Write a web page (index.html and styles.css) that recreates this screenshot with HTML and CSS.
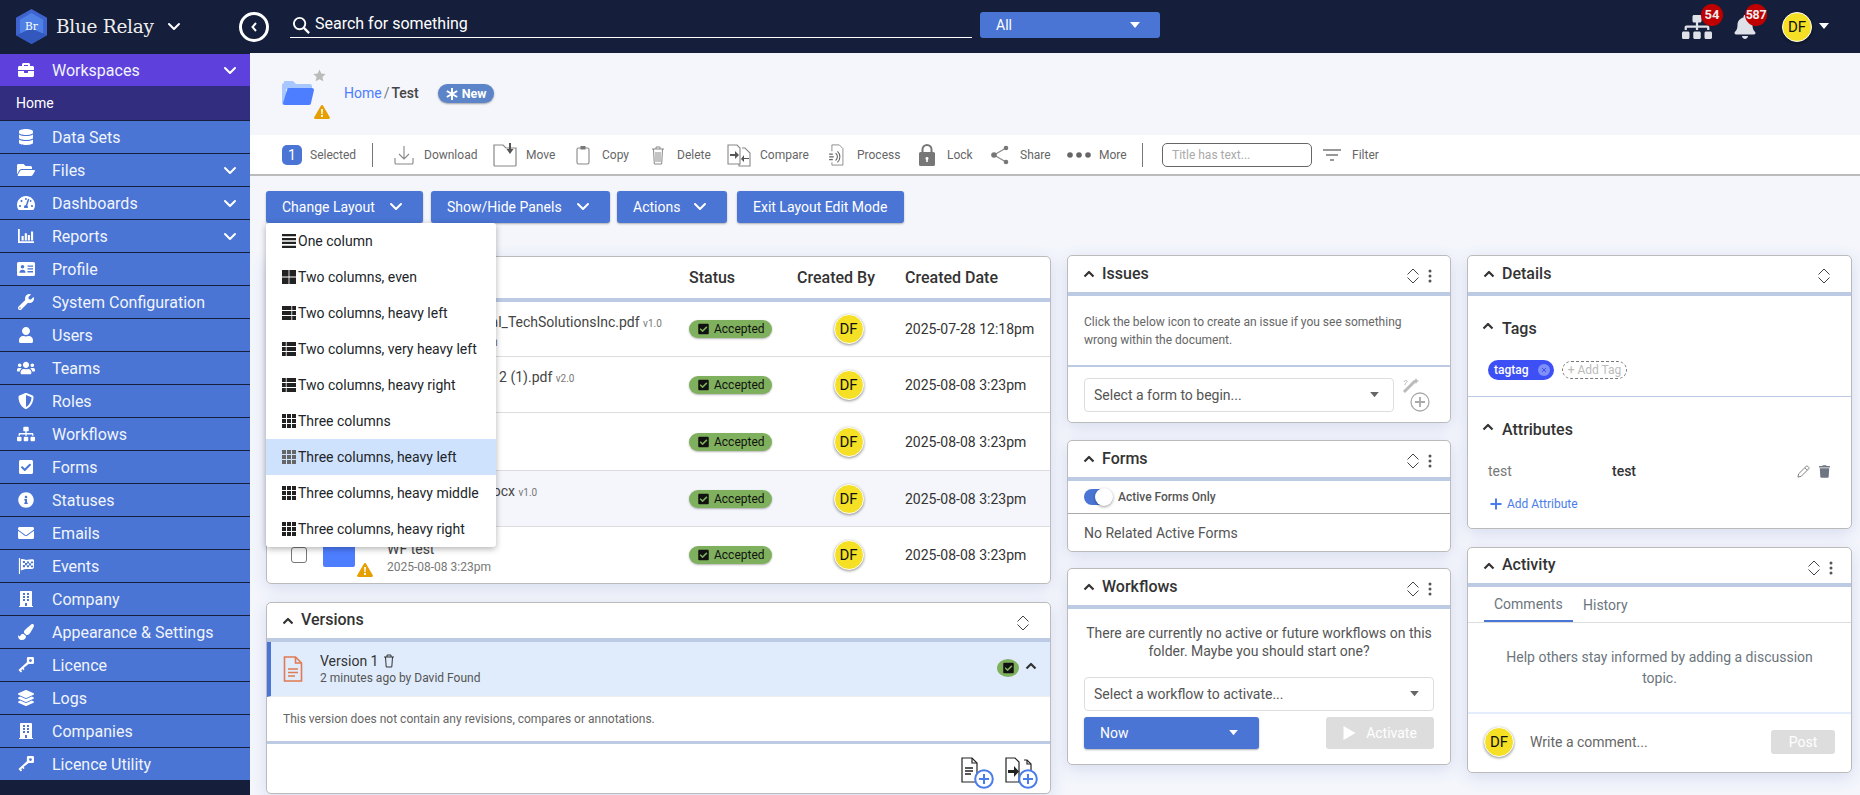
FILE: index.html
```html
<!DOCTYPE html>
<html lang="en">
<head>
<meta charset="utf-8">
<title>Blue Relay</title>
<link rel="stylesheet" href="styles.css">
</head>
<body>
<svg class="sprite" xmlns="http://www.w3.org/2000/svg">
<symbol id="i-briefcase" viewBox="0 0 512 512"><path d="M320 336c0 8.84-7.16 16-16 16h-96c-8.84 0-16-7.16-16-16v-48H0v144c0 25.6 22.4 48 48 48h416c25.6 0 48-22.4 48-48V288H320v48zm144-208h-80V80c0-25.6-22.4-48-48-48H176c-25.6 0-48 22.4-48 48v48H48c-25.6 0-48 22.4-48 48v80h512v-80c0-25.6-22.4-48-48-48zm-144 0H192V96h128v32z"/></symbol>
<symbol id="i-database" viewBox="0 0 448 512"><path d="M448 73.143v45.714C448 159.143 347.667 192 224 192S0 159.143 0 118.857V73.143C0 32.857 100.333 0 224 0s224 32.857 224 73.143zM448 176v102.857C448 319.143 347.667 352 224 352S0 319.143 0 278.857V176c48.125 33.143 136.208 48.572 224 48.572S399.874 209.143 448 176zm0 160v102.857C448 479.143 347.667 512 224 512S0 479.143 0 438.857V336c48.125 33.143 136.208 48.572 224 48.572S399.874 369.143 448 336z"/></symbol>
<symbol id="i-folder" viewBox="0 0 576 512"><path d="M572.694 292.093L500.27 416.248A63.997 63.997 0 0 1 444.989 448H45.025c-18.523 0-30.064-20.093-20.731-36.093l72.424-124.155A64 64 0 0 1 152 256h399.964c18.523 0 30.064 20.093 20.73 36.093zM152 224h328v-48c0-26.51-21.49-48-48-48H272l-64-64H48C21.49 64 0 85.49 0 112v278.046l69.077-118.418C86.214 242.25 117.989 224 152 224z"/></symbol>
<symbol id="i-gauge" viewBox="0 0 576 512"><path d="M288 32C128.94 32 0 160.94 0 320c0 52.8 14.25 102.26 39.06 144.8 5.61 9.62 16.3 15.2 27.44 15.2h443c11.14 0 21.83-5.58 27.44-15.2C561.75 422.26 576 372.8 576 320c0-159.06-128.94-288-288-288zm0 64c14.71 0 26.58 10.13 30.32 23.65-1.11 2.26-2.64 4.23-3.45 6.67l-9.22 27.67c-5.13 3.49-10.97 6.01-17.64 6.01-17.67 0-32-14.33-32-32S270.33 96 288 96zM96 384c-17.67 0-32-14.33-32-32s14.33-32 32-32 32 14.33 32 32-14.33 32-32 32zm48-160c-17.67 0-32-14.33-32-32s14.33-32 32-32 32 14.33 32 32-14.33 32-32 32zm246.77-72.41l-61.33 184C343.13 347.33 352 364.54 352 384c0 11.72-3.38 22.55-8.88 32H232.88c-5.5-9.45-8.88-20.28-8.88-32 0-33.94 26.5-61.43 59.9-63.59l61.34-184.01c4.17-12.56 17.73-19.45 30.36-15.17 12.57 4.19 19.35 17.79 15.17 30.36zm14.66 57.2l15.52-46.55c3.47-1.29 7.13-2.23 11.05-2.23 17.67 0 32 14.33 32 32s-14.33 32-32 32c-11.38-.01-20.89-6.28-26.57-15.22zM480 384c-17.67 0-32-14.33-32-32s14.33-32 32-32 32 14.33 32 32-14.33 32-32 32z"/></symbol>
<symbol id="i-chart" viewBox="0 0 18 18"><path d="M0 1h2v14h16v2H0zM4 9h2.4v5H4zM7.6 6h2.4v8H7.6zM11 8h2.4v6H11zM14.6 4H17v10h-2.4z"/></symbol>
<symbol id="i-idcard" viewBox="0 0 18 14"><path fill-rule="evenodd" d="M1.500 0h15A1.500 1.500 0 0 1 18 1.500v11a1.500 1.500 0 0 1-1.500 1.500h-15A1.500 1.500 0 0 1 0 12.500v-11A1.500 1.500 0 0 1 1.500 0zM5.500 3a1.800 1.800 0 1 0 0 3.600 1.800 1.800 0 0 0 0-3.600zM2.400 10.800h6.200c0-1.900-1.300-3.100-3.100-3.100s-3.100 1.200-3.100 3.100zM10.500 3.500v1.300h5.500V3.500zM10.500 6.300v1.300h5.500V6.300zM10.500 9.100v1.300h5.500V9.100z"/></symbol>
<symbol id="i-wrench" viewBox="0 0 512 512"><path d="M507.73 109.1c-2.24-9.03-13.54-12.09-20.12-5.51l-74.36 74.36-67.88-11.31-11.31-67.88 74.36-74.36c6.62-6.62 3.43-17.9-5.66-20.16-47.38-11.74-99.55.91-136.58 37.93-39.64 39.64-50.55 97.1-34.05 147.2L18.74 402.76c-24.99 24.99-24.99 65.51 0 90.5 24.99 24.99 65.51 24.99 90.5 0l213.21-213.21c50.12 16.71 107.47 5.68 147.37-34.22 37.07-37.07 49.7-89.32 37.91-136.73zM64 472c-13.25 0-24-10.75-24-24 0-13.26 10.75-24 24-24s24 10.74 24 24c0 13.25-10.75 24-24 24z"/></symbol>
<symbol id="i-user" viewBox="0 0 448 512"><path d="M224 256c70.7 0 128-57.3 128-128S294.7 0 224 0 96 57.3 96 128s57.3 128 128 128zm89.6 32h-16.7c-22.2 10.2-46.9 16-72.9 16s-50.6-5.8-72.9-16h-16.7C60.2 288 0 348.2 0 422.4V464c0 26.5 21.5 48 48 48h352c26.5 0 48-21.5 48-48v-41.6c0-74.2-60.2-134.4-134.400-134.400z"/></symbol>
<symbol id="i-users" viewBox="0 0 640 512"><path d="M96 224c35.3 0 64-28.7 64-64s-28.7-64-64-64-64 28.7-64 64 28.7 64 64 64zm448 0c35.3 0 64-28.7 64-64s-28.7-64-64-64-64 28.7-64 64 28.7 64 64 64zm32 32h-64c-17.6 0-33.5 7.1-45.1 18.6 40.3 22.1 68.9 62 75.1 109.4h66c17.7 0 32-14.3 32-32v-32c0-35.3-28.7-64-64-64zm-256 0c61.9 0 112-50.1 112-112S381.9 32 320 32 208 82.1 208 144s50.1 112 112 112zm76.8 32h-8.3c-20.8 10-43.9 16-68.5 16s-47.6-6-68.5-16h-8.3C179.6 288 128 339.6 128 403.2V432c0 26.5 21.5 48 48 48h288c26.5 0 48-21.5 48-48v-28.8c0-63.6-51.6-115.2-115.2-115.2zm-223.7-13.4C161.5 263.1 145.6 256 128 256H64c-35.3 0-64 28.7-64 64v32c0 17.7 14.3 32 32 32h65.9c6.3-47.4 34.9-87.3 75.2-109.4z"/></symbol>
<symbol id="i-shield" viewBox="0 0 512 512"><path d="M466.5 83.700l-192-80a48.150 48.150 0 0 0-36.900 0l-192 80C27.700 91.100 16 108.600 16 128c0 198.500 114.500 335.700 221.500 380.300 11.800 4.900 25.100 4.900 36.900 0C360.100 472.600 496 349.300 496 128c0-19.400-11.700-36.900-29.500-44.300zM256.100 446.300l-.1-381 175.900 73.300c-3.300 151.400-82.100 261.100-175.800 307.700z"/></symbol>
<symbol id="i-sitemap" viewBox="0 0 640 512"><path d="M128 352H32c-17.670 0-32 14.330-32 32v96c0 17.670 14.330 32 32 32h96c17.670 0 32-14.330 32-32v-96c0-17.670-14.330-32-32-32zm-24-80h192v48h48v-48h192v48h48v-57.590c0-21.170-17.230-38.410-38.410-38.410H344v-64h40c17.670 0 32-14.330 32-32V32c0-17.670-14.330-32-32-32H256c-17.670 0-32 14.330-32 32v96c0 17.670 14.330 32 32 32h40v64H94.410C73.230 224 56 241.230 56 262.410V320h48v-48zm264 80h-96c-17.670 0-32 14.330-32 32v96c0 17.670 14.330 32 32 32h96c17.670 0 32-14.330 32-32v-96c0-17.670-14.330-32-32-32zm240 0h-96c-17.670 0-32 14.330-32 32v96c0 17.670 14.330 32 32 32h96c17.670 0 32-14.330 32-32v-96c0-17.670-14.330-32-32-32z"/></symbol>
<symbol id="i-check" viewBox="0 0 448 512"><path d="M400 480H48c-26.510 0-48-21.490-48-48V80c0-26.510 21.490-48 48-48h352c26.510 0 48 21.490 48 48v352c0 26.510-21.490 48-48 48zm-204.686-98.059l184-184c6.248-6.248 6.248-16.379 0-22.627l-22.627-22.627c-6.248-6.248-16.379-6.249-22.628 0L184 302.745l-70.059-70.059c-6.248-6.248-16.379-6.248-22.628 0l-22.627 22.627c-6.248 6.248-6.248 16.379 0 22.627l104 104c6.249 6.250 16.379 6.250 22.628.001z"/></symbol>
<symbol id="i-info" viewBox="0 0 512 512"><path d="M256 8C119.043 8 8 119.083 8 256c0 136.997 111.043 248 248 248s248-111.003 248-248C504 119.083 392.957 8 256 8zm0 110c23.196 0 42 18.804 42 42s-18.804 42-42 42-42-18.804-42-42 18.804-42 42-42zm56 254c0 6.627-5.373 12-12 12h-88c-6.627 0-12-5.373-12-12v-24c0-6.627 5.373-12 12-12h12v-64h-12c-6.627 0-12-5.373-12-12v-24c0-6.627 5.373-12 12-12h64c6.627 0 12 5.373 12 12v100h12c6.627 0 12 5.373 12 12v24z"/></symbol>
<symbol id="i-mail" viewBox="0 0 512 512"><path d="M502.300 190.800c3.900-3.100 9.700-.2 9.700 4.700V400c0 26.500-21.500 48-48 48H48c-26.500 0-48-21.500-48-48V195.600c0-5 5.700-7.800 9.700-4.700 22.400 17.400 52.100 39.500 154.100 113.600 21.100 15.400 56.700 47.800 92.200 47.600 35.700.3 72-32.800 92.300-47.600 102-74.100 131.600-96.300 154-113.700zM256 320c23.200.4 56.600-29.200 73.400-41.400 132.700-96.300 142.800-104.700 173.400-128.700 5.800-4.500 9.200-11.500 9.200-18.900v-19c0-26.500-21.500-48-48-48H48C21.500 64 0 85.500 0 112v19c0 7.400 3.400 14.300 9.200 18.900 30.600 23.900 40.700 32.400 173.400 128.700 16.800 12.200 50.200 41.800 73.400 41.400z"/></symbol>
<symbol id="i-flag" viewBox="0 0 18 18"><path fill-rule="evenodd" d="M1 0h1.300v18H1zM3.200 1.500c3-1 4.800 1 7.500.6 2-.3 4.200-1 5.800-.6 1 .2 1.500.8 1.500 1.500v7.500c0 1-.8 1.600-2 1.800-2.700.5-5-.3-7.500.2-2 .4-3.700 1-5.300 1.500zM5.500 3.500v2.200h2.300V3.500zM10 4v2.200h2.400V4zM14.500 3.800V6H17V3.800zM7.800 5.700v2.400h2.200V5.700zM12.400 6v2.300h2.100V6zM5.500 8v2.300h2.300V8zM10 8.200v2.300h2.400V8.200zM14.500 8.300v2.200H17V8.300z"/></symbol>
<symbol id="i-building" viewBox="0 0 448 512"><path d="M436 480h-20V24c0-13.255-10.745-24-24-24H56C42.745 0 32 10.745 32 24v456H12c-6.627 0-12 5.373-12 12v20h448v-20c0-6.627-5.373-12-12-12zM128 76c0-6.627 5.373-12 12-12h40c6.627 0 12 5.373 12 12v40c0 6.627-5.373 12-12 12h-40c-6.627 0-12-5.373-12-12V76zm0 96c0-6.627 5.373-12 12-12h40c6.627 0 12 5.373 12 12v40c0 6.627-5.373 12-12 12h-40c-6.627 0-12-5.373-12-12v-40zm52 148h-40c-6.627 0-12-5.373-12-12v-40c0-6.627 5.373-12 12-12h40c6.627 0 12 5.373 12 12v40c0 6.627-5.373 12-12 12zm76 160h-64v-84c0-6.627 5.373-12 12-12h40c6.627 0 12 5.373 12 12v84zm64-172c0 6.627-5.373 12-12 12h-40c-6.627 0-12-5.373-12-12v-40c0-6.627 5.373-12 12-12h40c6.627 0 12 5.373 12 12v40zm0-96c0 6.627-5.373 12-12 12h-40c-6.627 0-12-5.373-12-12v-40c0-6.627 5.373-12 12-12h40c6.627 0 12 5.373 12 12v40zm0-96c0 6.627-5.373 12-12 12h-40c-6.627 0-12-5.373-12-12V76c0-6.627 5.373-12 12-12h40c6.627 0 12 5.373 12 12v40z"/></symbol>
<symbol id="i-brush" viewBox="0 0 512 512"><path d="M167.020 309.340c-40.120 2.580-76.530 17.860-97.190 72.300-2.350 6.210-8 9.980-14.590 9.980-11.110 0-45.460-27.670-55.250-34.350C0 439.620 37.930 512 128 512c75.860 0 128-43.770 128-120.190 0-3.110-.65-6.080-.97-9.130l-88.010-73.340zM457.890 0c-15.160 0-29.370 6.710-40.210 16.450C213.270 199.050 192 203.340 192 257.090c0 13.700 3.250 26.760 8.730 38.700l63.820 53.180c7.210 1.800 14.640 3.030 22.390 3.030 62.110 0 98.110-45.470 211.160-256.460 7.380-14.350 13.900-29.850 13.900-45.990C512 20.640 486 0 457.890 0z"/></symbol>
<symbol id="i-key" viewBox="0 0 18 18"><path d="M11.500 0h5A1.500 1.500 0 0 1 18 1.500v5A1.500 1.500 0 0 1 16.500 8h-5A1.500 1.500 0 0 1 10 6.500v-5A1.500 1.500 0 0 1 11.500 0zM14 2.400a1.600 1.600 0 1 0 0 3.200 1.600 1.600 0 0 0 0-3.200z"/><path d="M10 6L.5 14.500l2.700 3 1.500-1.400-1.200-1.200 1.400-1.300 1.200 1.200 1.300-1.200-1.200-1.200L12 8z"/></symbol>
<symbol id="i-layers" viewBox="0 0 512 512"><path d="M12.410 148.020l232.940 105.670c6.800 3.090 14.490 3.090 21.290 0l232.940-105.670c16.550-7.510 16.550-32.520 0-40.030L266.650 2.310a25.607 25.607 0 0 0-21.290 0L12.410 107.980c-16.550 7.510-16.550 32.530 0 40.040zm487.180 88.280l-58.090-26.330-161.640 73.270c-7.560 3.430-15.590 5.170-23.860 5.170s-16.290-1.740-23.860-5.170L70.510 209.970l-58.100 26.330c-16.550 7.500-16.550 32.500 0 40l232.940 105.590c6.800 3.080 14.490 3.080 21.290 0L499.590 276.300c16.550-7.500 16.550-32.500 0-40zm0 127.800l-57.870-26.230-161.860 73.370c-7.560 3.430-15.590 5.170-23.860 5.170s-16.290-1.740-23.860-5.170L70.290 337.870 12.410 364.100c-16.550 7.500-16.550 32.500 0 40l232.940 105.590c6.800 3.080 14.490 3.080 21.290 0L499.590 404.100c16.550-7.500 16.550-32.500 0-40z"/></symbol>
<symbol id="i-bell" viewBox="0 0 448 512"><path d="M224 512c35.320 0 63.970-28.650 63.970-64H160.030c0 35.350 28.650 64 63.970 64zm215.390-149.710c-19.320-20.760-55.470-51.990-55.470-154.290 0-77.700-54.480-139.900-127.940-155.160V32c0-17.670-14.320-32-31.980-32s-31.980 14.330-31.980 32v20.840C118.560 68.100 64.080 130.300 64.080 208c0 102.300-36.150 133.530-55.470 154.290-6 6.450-8.660 14.160-8.610 21.710.11 16.400 12.980 32 32.100 32h383.800c19.120 0 32-15.600 32.100-32 .05-7.550-2.610-15.260-8.610-21.710z"/></symbol>
<symbol id="i-trash" viewBox="0 0 448 512"><path d="M432 32H312l-9.400-18.700A24 24 0 0 0 281.100 0H166.800a23.720 23.720 0 0 0-21.400 13.300L136 32H16A16 16 0 0 0 0 48v32a16 16 0 0 0 16 16h416a16 16 0 0 0 16-16V48a16 16 0 0 0-16-16zM53.200 467a48 48 0 0 0 47.900 45h245.800a48 48 0 0 0 47.900-45L416 128H32z"/></symbol>
<symbol id="i-chev" viewBox="0 0 14 10"><path d="M2 2l5 5 5-5" fill="none" stroke="currentColor" stroke-width="2" stroke-linecap="round" stroke-linejoin="round"/></symbol>
<symbol id="i-up" viewBox="0 0 12 8"><path d="M1.500 6.500L6 2l4.500 4.500" fill="none" stroke="currentColor" stroke-width="2.200" stroke-linejoin="round"/></symbol>
<symbol id="i-caret" viewBox="0 0 12 7"><path d="M1 0h10L6 6z"/></symbol>
<symbol id="i-expand" viewBox="0 0 14 20"><path d="M1.500 8.500L7 3l5.500 5.500M1.500 11.500L7 17l5.500-5.500" fill="none" stroke="currentColor" stroke-width="1"/></symbol>
<symbol id="i-kebab" viewBox="0 0 4 14"><circle cx="2" cy="2" r="1.500"/><circle cx="2" cy="7" r="1.500"/><circle cx="2" cy="12" r="1.500"/></symbol>
<symbol id="i-warn" viewBox="0 0 16 14"><path d="M8 0c.5 0 .9.3 1.100.7l6.700 11.500c.4.800-.1 1.800-1.100 1.800H1.300c-1 0-1.500-1-1.100-1.800L6.900.7C7.100.3 7.500 0 8 0z" fill="#e69f00"/><path d="M7.100 4h1.800l-.3 5H7.400zM8 9.800a1.100 1.100 0 1 1 0 2.200 1.100 1.100 0 0 1 0-2.200z" fill="#fff"/></symbol>
<symbol id="i-bars" viewBox="0 0 14 14"><path d="M0 0h14v2.300H0zM0 3.900h14v2.300H0zM0 7.800h14v2.300H0zM0 11.700h14V14H0z"/></symbol>
<symbol id="i-large" viewBox="0 0 14 14"><path d="M0 0h6.600v6.600H0zM7.400 0H14v6.600H7.400zM0 7.400h6.600V14H0zM7.400 7.400H14V14H7.400z"/></symbol>
<symbol id="i-list" viewBox="0 0 14 14"><path d="M0 0h3.800v3.900H0zM4.600 0H14v3.900H4.600zM0 5h3.800v3.900H0zM4.600 5H14v3.900H4.600zM0 10h3.800v4H0zM4.600 10H14v4H4.600z"/></symbol>
<symbol id="i-listr" viewBox="0 0 14 14"><path d="M0 0h9.400v3.900H0zM10.200 0H14v3.900h-3.800zM0 5h9.400v3.900H0zM10.200 5H14v3.900h-3.800zM0 10h9.400v4H0zM10.200 10H14v4h-3.800z"/></symbol>
<symbol id="i-grid" viewBox="0 0 14 14"><path d="M0 0h4v4H0zM5 0h4v4H5zM10 0h4v4h-4zM0 5h4v4H0zM5 5h4v4H5zM10 5h4v4h-4zM0 10h4v4H0zM5 10h4v4H5zM10 10h4v4h-4z"/></symbol>
<symbol id="i-doc" viewBox="0 0 20 26"><path d="M1.500 1h11l6 6v18h-17z" fill="none" stroke="currentColor" stroke-width="1.600"/><path d="M12.500 1v6h6M5 13h10M5 16.500h10M5 20h7" fill="none" stroke="currentColor" stroke-width="1.600"/></symbol>
<symbol id="i-plus" viewBox="0 0 20 20"><circle cx="10" cy="10" r="8.800" fill="#fff" stroke="currentColor" stroke-width="2"/><path d="M10 5v10M5 10h10" stroke="currentColor" stroke-width="2" fill="none"/></symbol>
<symbol id="i-docplus" viewBox="0 0 34 32"><path d="M1 1h10l5 5v19H1z" fill="none" stroke="#222" stroke-width="1.200"/><path d="M11 1v5h5" fill="none" stroke="#222" stroke-width="1.200"/><path d="M4 11h8M4 14h8M4 17h6" stroke="#222" stroke-width="1.400"/></symbol>
<symbol id="i-cmpplus" viewBox="0 0 34 32"><path d="M1 1h9l4 4v20H1z" fill="none" stroke="#222" stroke-width="1.200"/><path d="M3 13h6V9l5 5.500L9 20v-4H3z" fill="#222"/><path d="M19 3h3l4 4v14" fill="none" stroke="#222" stroke-width="1.200"/><path d="M22 3v4h4" fill="none" stroke="#222" stroke-width="1.200"/><path d="M22 13v8l-4-4z" fill="#222"/></symbol>
</svg>

<header class="topbar">
  <div class="brand">
    <svg class="logo" viewBox="0 0 32 36"><polygon points="16,0 32,9 32,27 16,36 0,27 0,9" fill="#3f63cf"/><polygon points="16,4 28,11 28,25 16,32 4,25 4,11" fill="#4f80e6"/><polygon points="0,27 16,20 32,27 16,36" fill="#3358bd"/><text x="16" y="22" text-anchor="middle" class="logo-text">Br</text></svg>
    <span class="brand-name">Blue Relay</span>
    <svg class="w14 white"><use href="#i-chev"/></svg>
  </div>
  <div class="back"><svg class="back-ic" viewBox="0 0 8 12"><path d="M6 2L2.500 6 6 10" fill="none" stroke="#fff" stroke-width="2"/></svg></div>
  <div class="search">
    <svg class="search-ic" viewBox="0 0 20 20"><circle cx="8" cy="8" r="6" fill="none" stroke="#fff" stroke-width="2"/><path d="M12.500 12.500L18 18" stroke="#fff" stroke-width="2.400" fill="none"/></svg>
    <span>Search for something</span>
  </div>
  <div class="scope"><span>All</span><svg class="w12 white"><use href="#i-caret"/></svg></div>
  <div class="top-right">
    <div class="notif notif-site"><svg class="site-ic"><use href="#i-sitemap"/></svg><b class="badge">54</b></div>
    <div class="notif notif-bell"><svg class="bell-ic"><use href="#i-bell"/></svg><b class="badge badge-b">587</b></div>
    <span class="avatar avatar-top">DF</span>
    <svg class="w12 white"><use href="#i-caret"/></svg>
  </div>
</header>

<div class="shell">
<nav class="sidebar">
  <a class="nav nav-active"><svg class="nav-ic"><use href="#i-briefcase"/></svg><span>Workspaces</span><svg class="w14 nav-chev"><use href="#i-chev"/></svg></a>
  <a class="nav-sub">Home</a>
  <a class="nav"><svg class="nav-ic"><use href="#i-database"/></svg><span>Data Sets</span></a>
  <a class="nav"><svg class="nav-ic"><use href="#i-folder"/></svg><span>Files</span><svg class="w14 nav-chev"><use href="#i-chev"/></svg></a>
  <a class="nav"><svg class="nav-ic"><use href="#i-gauge"/></svg><span>Dashboards</span><svg class="w14 nav-chev"><use href="#i-chev"/></svg></a>
  <a class="nav"><svg class="nav-ic"><use href="#i-chart"/></svg><span>Reports</span><svg class="w14 nav-chev"><use href="#i-chev"/></svg></a>
  <a class="nav"><svg class="nav-ic"><use href="#i-idcard"/></svg><span>Profile</span></a>
  <a class="nav"><svg class="nav-ic"><use href="#i-wrench"/></svg><span>System Configuration</span></a>
  <a class="nav"><svg class="nav-ic"><use href="#i-user"/></svg><span>Users</span></a>
  <a class="nav"><svg class="nav-ic"><use href="#i-users"/></svg><span>Teams</span></a>
  <a class="nav"><svg class="nav-ic"><use href="#i-shield"/></svg><span>Roles</span></a>
  <a class="nav"><svg class="nav-ic"><use href="#i-sitemap"/></svg><span>Workflows</span></a>
  <a class="nav"><svg class="nav-ic"><use href="#i-check"/></svg><span>Forms</span></a>
  <a class="nav"><svg class="nav-ic"><use href="#i-info"/></svg><span>Statuses</span></a>
  <a class="nav"><svg class="nav-ic"><use href="#i-mail"/></svg><span>Emails</span></a>
  <a class="nav"><svg class="nav-ic"><use href="#i-flag"/></svg><span>Events</span></a>
  <a class="nav"><svg class="nav-ic"><use href="#i-building"/></svg><span>Company</span></a>
  <a class="nav"><svg class="nav-ic"><use href="#i-brush"/></svg><span>Appearance &amp; Settings</span></a>
  <a class="nav"><svg class="nav-ic"><use href="#i-key"/></svg><span>Licence</span></a>
  <a class="nav"><svg class="nav-ic"><use href="#i-layers"/></svg><span>Logs</span></a>
  <a class="nav"><svg class="nav-ic"><use href="#i-building"/></svg><span>Companies</span></a>
  <a class="nav"><svg class="nav-ic"><use href="#i-key"/></svg><span>Licence Utility</span></a>
</nav>

<main class="main">
  <section class="pagehead">
    <div class="folder-box">
      <svg class="folder-big" viewBox="0 0 32 24"><path d="M2 0h9l3 3h14a2 2 0 0 1 2 2v3H2z" fill="#a9c7ff"/><path d="M0 4a2 2 0 0 1 2-2h2v22H2a2 2 0 0 1-2-2z" fill="#a9c7ff"/><path d="M3 24a2 2 0 0 1-2-2L5 9a2 2 0 0 1 2-2h23a2 2 0 0 1 2 2l-3 13a2 2 0 0 1-2 2z" fill="#4d7eff"/></svg>
      <svg class="star" viewBox="0 0 24 24"><path d="M12 1l3.400 7.400 8 .9-6 5.400 1.700 8L12 18.700 4.900 22.700l1.700-8-6-5.400 8-.9z" fill="#bbb"/></svg>
      <svg class="warn-big"><use href="#i-warn"/></svg>
    </div>
    <div class="crumbs"><a class="crumb-link">Home</a><span class="crumb-sep">/</span><span class="crumb-cur">Test</span></div>
    <span class="new-pill"><svg class="new-ic" viewBox="0 0 12 12"><path d="M6 0v12M.8 3l10.400 6M11.200 3L.8 9" stroke="#fff" stroke-width="2"/></svg>New</span>
  </section>

  <section class="toolbar">
    <span class="count">1</span><span class="tool-label sel">Selected</span>
    <span class="vsep"></span>
    <div class="tools">
      <div class="tool tool-first"><svg class="ti" viewBox="0 0 20 20"><path d="M10 1v13M5 9l5 5 5-5M1 13v5a1 1 0 0 0 1 1h16a1 1 0 0 0 1-1v-5" fill="none" stroke="#888" stroke-width="1.100"/></svg><span class="tool-label">Download</span></div>
      <div class="tool"><svg class="ti-move" viewBox="0 0 24 24"><path d="M1 2h9l3 3h10v17a1 1 0 0 1-1 1H2a1 1 0 0 1-1-1z" fill="none" stroke="#888" stroke-width="1.200"/><path d="M16 0h2v6h2.500L17 11l-3.500-5H16z" fill="#555"/></svg><span class="tool-label">Move</span></div>
      <div class="tool"><svg class="ti-narrow" viewBox="0 0 14 20"><rect x="1" y="3" width="12" height="16" rx="1.500" fill="none" stroke="#888" stroke-width="1.100"/><rect x="4.500" y="1" width="5" height="3.500" fill="#777"/></svg><span class="tool-label">Copy</span></div>
      <div class="tool"><svg class="ti-narrow" viewBox="0 0 14 20"><path d="M1 4h12M5 4V2h4v2M2.500 4l.8 15h7.400l.8-15M5 7v10M7 7v10M9 7v10" fill="none" stroke="#888" stroke-width="1"/></svg><span class="tool-label">Delete</span></div>
      <div class="tool"><svg class="ti-move" viewBox="0 0 24 24"><path d="M1 2h9l3 3v16H1zM15 5h3l5 5v13H12v-2" fill="none" stroke="#888" stroke-width="1.100"/><path d="M3 11h5V8l4 4-4 4v-3H3zM22 15h-5v-3l-3 4 3 3v-3h5z" fill="#555"/></svg><span class="tool-label">Compare</span></div>
      <div class="tool"><svg class="ti-proc" viewBox="0 0 16 24"><path d="M3 8V1h8l4 4v18H3v-3" fill="none" stroke="#888" stroke-width="1"/><path d="M0 11h4M0 14h5M0 17h4M7 10a5 5 0 0 1 0 8M9 8a8 8 0 0 1 0 12" fill="none" stroke="#666" stroke-width="1.200"/></svg><span class="tool-label">Process</span></div>
      <div class="tool"><svg class="ti-lock" viewBox="0 0 16 22"><path d="M3.500 9V5.500a4.500 4.500 0 0 1 9 0V9" fill="none" stroke="#777" stroke-width="2"/><path fill-rule="evenodd" d="M1.500 8h13A1.500 1.500 0 0 1 16 9.500v11a1.500 1.500 0 0 1-1.500 1.500h-13A1.500 1.500 0 0 1 0 20.500v-11A1.500 1.500 0 0 1 1.500 8zM8 13a1.500 1.500 0 0 0-.8 2.800V18h1.600v-2.200A1.500 1.500 0 0 0 8 13z" fill="#777"/></svg><span class="tool-label">Lock</span></div>
      <div class="tool"><svg class="ti-share" viewBox="0 0 18 20"><path d="M15 3L3 10l12 7" fill="none" stroke="#888" stroke-width="1.200"/><circle cx="15" cy="3" r="2.300" fill="#777"/><circle cx="3" cy="10" r="2.800" fill="#777"/><circle cx="15" cy="17" r="2.300" fill="#777"/></svg><span class="tool-label">Share</span></div>
      <div class="tool"><svg class="ti-dots" viewBox="0 0 24 6"><circle cx="3" cy="3" r="2.800" fill="#666"/><circle cx="12" cy="3" r="2.800" fill="#666"/><circle cx="21" cy="3" r="2.800" fill="#666"/></svg><span class="tool-label">More</span></div>
    </div>
    <span class="vsep vsep2"></span>
    <div class="title-filter">Title has text...</div>
    <svg class="ti-filter" viewBox="0 0 18 12"><path d="M0 1h18M3 6h12M7 11h4" stroke="#777" stroke-width="1.500" fill="none"/></svg>
    <span class="tool-label">Filter</span>
  </section>

  <div class="workspace">
    <div class="actions">
      <button class="btn btn-layout">Change Layout<svg class="w14 white"><use href="#i-chev"/></svg></button>
      <button class="btn btn-panels">Show/Hide Panels<svg class="w14 white"><use href="#i-chev"/></svg></button>
      <button class="btn btn-actions">Actions<svg class="w14 white"><use href="#i-chev"/></svg></button>
      <button class="btn btn-exit">Exit Layout Edit Mode</button>
    </div>
    <ul class="menu">
      <li class="menu-item"><svg class="mi"><use href="#i-bars"/></svg>One column</li>
      <li class="menu-item"><svg class="mi"><use href="#i-large"/></svg>Two columns, even</li>
      <li class="menu-item"><svg class="mi"><use href="#i-listr"/></svg>Two columns, heavy left</li>
      <li class="menu-item"><svg class="mi"><use href="#i-list"/></svg>Two columns, very heavy left</li>
      <li class="menu-item"><svg class="mi"><use href="#i-list"/></svg>Two columns, heavy right</li>
      <li class="menu-item"><svg class="mi"><use href="#i-grid"/></svg>Three columns</li>
      <li class="menu-item menu-on"><svg class="mi mi-on"><use href="#i-grid"/></svg>Three columns, heavy left</li>
      <li class="menu-item"><svg class="mi"><use href="#i-grid"/></svg>Three columns, heavy middle</li>
      <li class="menu-item"><svg class="mi"><use href="#i-grid"/></svg>Three columns, heavy right</li>
    </ul>

    <div class="columns">
      <div class="col col-a">
        <article class="card card-table">
          <div class="t-head">
            <span class="c-name"></span><span class="c-status">Status</span><span class="c-by">Created By</span><span class="c-date">Created Date</span>
          </div>
          <div class="t-row t-row-s">
            <span class="c-name"><span class="box"></span><span class="ficon"></span><span class="ftext"><span class="fname">Services_Proposal_TechSolutionsInc.pdf <small>v1.0</small></span><span class="fdate">2025-07-28 12:18pm</span></span></span>
            <span class="c-status"><span class="pill"><svg class="pill-ic"><use href="#i-check"/></svg>Accepted</span></span>
            <span class="c-by"><span class="avatar">DF</span></span>
            <span class="c-date">2025-07-28 12:18pm</span>
          </div>
          <div class="t-row">
            <span class="c-name"><span class="box"></span><span class="ficon"></span><span class="ftext"><span class="fname">Example_Reports 2 (1).pdf <small>v2.0</small></span><span class="fdate">2025-08-08 3:23pm</span></span></span>
            <span class="c-status"><span class="pill"><svg class="pill-ic"><use href="#i-check"/></svg>Accepted</span></span>
            <span class="c-by"><span class="avatar">DF</span></span>
            <span class="c-date">2025-08-08 3:23pm</span>
          </div>
          <div class="t-row t-row-l">
            <span class="c-name"><span class="box"></span><span class="ficon"></span><span class="ftext"><span class="fname">Test</span><span class="fdate">2025-08-08 3:23pm</span></span></span>
            <span class="c-status"><span class="pill"><svg class="pill-ic"><use href="#i-check"/></svg>Accepted</span></span>
            <span class="c-by"><span class="avatar">DF</span></span>
            <span class="c-date">2025-08-08 3:23pm</span>
          </div>
          <div class="t-row t-row-alt">
            <span class="c-name"><span class="box"></span><span class="ficon"></span><span class="ftext"><span class="fname">Meeting_Notes.docx <small>v1.0</small></span><span class="fdate">2025-08-08 3:23pm</span></span></span>
            <span class="c-status"><span class="pill"><svg class="pill-ic"><use href="#i-check"/></svg>Accepted</span></span>
            <span class="c-by"><span class="avatar">DF</span></span>
            <span class="c-date">2025-08-08 3:23pm</span>
          </div>
          <div class="t-row t-row-last">
            <span class="c-name"><span class="box"></span><span class="ficon"><svg class="warn-sm"><use href="#i-warn"/></svg></span><span class="ftext"><span class="fname">WF test</span><span class="fdate">2025-08-08 3:23pm</span></span></span>
            <span class="c-status"><span class="pill"><svg class="pill-ic"><use href="#i-check"/></svg>Accepted</span></span>
            <span class="c-by"><span class="avatar">DF</span></span>
            <span class="c-date">2025-08-08 3:23pm</span>
          </div>
        </article>

        <article class="card card-versions">
          <div class="c-head c-head-v"><svg class="up"><use href="#i-up"/></svg><h2>Versions</h2><svg class="exp exp-d"><use href="#i-expand"/></svg></div>
          <div class="v-row">
            <svg class="v-doc"><use href="#i-doc"/></svg>
            <div class="v-text">
              <div class="v-title">Version 1 <svg class="v-trash" viewBox="0 0 12 14"><path d="M1 3h10M4 3V1h4v2M2.500 3l.7 10h5.600l.7-10" fill="none" stroke="#333" stroke-width="1"/></svg></div>
              <div class="v-sub">2 minutes ago by David Found</div>
            </div>
            <span class="v-status"><svg class="pill-ic"><use href="#i-check"/></svg></span>
            <svg class="up up-v"><use href="#i-up"/></svg>
          </div>
          <div class="v-msg">This version does not contain any revisions, compares or annotations.</div>
          <div class="v-foot">
            <span class="add-ic"><svg class="add-base"><use href="#i-docplus"/></svg><svg class="add-plus"><use href="#i-plus"/></svg></span>
            <span class="add-ic"><svg class="add-base"><use href="#i-cmpplus"/></svg><svg class="add-plus"><use href="#i-plus"/></svg></span>
          </div>
        </article>
      </div>

      <div class="col col-b">
        <article class="card card-issues">
          <div class="c-head"><svg class="up"><use href="#i-up"/></svg><h2>Issues</h2><svg class="exp"><use href="#i-expand"/></svg><svg class="keb"><use href="#i-kebab"/></svg></div>
          <p class="issue-msg">Click the below icon to create an issue if you see something wrong within the document.</p>
          <div class="issue-foot">
            <div class="select select-issue"><span>Select a form to begin...</span><svg class="w10 grey"><use href="#i-caret"/></svg></div>
            <span class="wand"><svg class="wand-ic" viewBox="0 0 18 16"><path d="M2 14L13 3" stroke="#bbb" stroke-width="3"/><path d="M14 0l1 2 2 1-2 1-1 2-1-2-2-1 2-1z" fill="#bbb"/><path d="M2 4c0-2 4-2 3 0-.5 1-2 1-2 3" stroke="#bbb" fill="none"/></svg><svg class="wand-plus" viewBox="0 0 20 20"><circle cx="10" cy="10" r="9" fill="#fff" stroke="#aaa" stroke-width="1.300"/><path d="M10 5v10M5 10h10" stroke="#aaa" stroke-width="1.800"/></svg></span>
          </div>
        </article>

        <article class="card card-forms">
          <div class="c-head"><svg class="up"><use href="#i-up"/></svg><h2>Forms</h2><svg class="exp"><use href="#i-expand"/></svg><svg class="keb"><use href="#i-kebab"/></svg></div>
          <div class="toggle-row"><span class="toggle"><span class="knob"></span></span><span class="toggle-label">Active Forms Only</span></div>
          <div class="forms-empty">No Related Active Forms</div>
        </article>

        <article class="card card-wf">
          <div class="c-head"><svg class="up"><use href="#i-up"/></svg><h2>Workflows</h2><svg class="exp"><use href="#i-expand"/></svg><svg class="keb"><use href="#i-kebab"/></svg></div>
          <p class="wf-msg">There are currently no active or future workflows on this folder. Maybe you should start one?</p>
          <div class="select select-wf"><span>Select a workflow to activate...</span><svg class="w10 grey"><use href="#i-caret"/></svg></div>
          <div class="wf-actions">
            <button class="btn btn-now">Now<svg class="w10 white"><use href="#i-caret"/></svg></button>
            <button class="btn-off btn-activate"><svg class="play" viewBox="0 0 12 14"><path d="M0 0l12 7-12 7z" fill="#fff"/></svg>Activate</button>
          </div>
        </article>
      </div>

      <div class="col col-c">
        <article class="card card-details">
          <div class="c-head"><svg class="up"><use href="#i-up"/></svg><h2>Details</h2><svg class="exp exp-d"><use href="#i-expand"/></svg></div>
          <div class="sec sec-tags">
            <div class="sec-h"><svg class="up-thin"><use href="#i-up"/></svg><h3>Tags</h3></div>
            <div class="tags">
              <span class="tag">tagtag<svg class="tag-x" viewBox="0 0 12 12"><circle cx="6" cy="6" r="6" fill="#7f8ff8"/><path d="M4 4l4 4M8 4l-4 4" stroke="#3d50f5" stroke-width="1"/></svg></span>
              <span class="tag-add">+ Add Tag</span>
            </div>
          </div>
          <div class="sec sec-attrs">
            <div class="sec-h"><svg class="up-thin"><use href="#i-up"/></svg><h3>Attributes</h3></div>
            <div class="attr">
              <span class="attr-k">test</span><span class="attr-v">test</span>
              <svg class="pen" viewBox="0 0 14 14"><path d="M1 13l.8-3.500L10 1.300a1 1 0 0 1 1.400 0l1.300 1.300a1 1 0 0 1 0 1.400L4.500 12.200zM8.500 3l2.500 2.500" fill="none" stroke="#777" stroke-width="1"/></svg>
              <svg class="bin"><use href="#i-trash"/></svg>
            </div>
            <div class="add-attr"><svg class="plus-sm" viewBox="0 0 12 12"><path d="M6 .5v11M.5 6h11" stroke="#4a7dea" stroke-width="2"/></svg>Add Attribute</div>
          </div>
        </article>

        <article class="card card-activity">
          <div class="c-head c-head-a"><svg class="up"><use href="#i-up"/></svg><h2>Activity</h2><svg class="exp"><use href="#i-expand"/></svg><svg class="keb"><use href="#i-kebab"/></svg></div>
          <div class="tabs"><span class="tab tab-on">Comments</span><span class="tab">History</span></div>
          <p class="act-msg">Help others stay informed by adding a discussion topic.</p>
          <div class="composer"><span class="avatar">DF</span><span class="placeholder">Write a comment...</span><button class="btn-off btn-post">Post</button></div>
        </article>
      </div>
    </div>
  </div>
</main>
</div>
</body>
</html>
```
FILE: styles.css
```css
* { box-sizing: border-box; }
html, body { margin: 0; height: 795px; overflow: hidden; }
body { font-family: Roboto, "Liberation Sans", sans-serif; font-size: 14px; color: #333; background: #151e3a; }
h2, h3, p, ul { margin: 0; padding: 0; }
svg { flex: none; display: block; fill: currentColor; }
.sprite { display: none; }
.w14 { width: 14px; height: 10px; }
.w12 { width: 12px; height: 7px; }
.w10 { width: 11px; height: 6px; }
.white { color: #fff; }
.grey { color: #666; }

/* top bar */
.topbar { height: 53px; background: #151e3a; display: flex; align-items: center; color: #fff; }
.brand { width: 239px; padding-left: 16px; display: flex; align-items: center; }
.logo { width: 31px; height: 35px; }
.logo-text { font-family: "DejaVu Serif", serif; font-size: 11px; fill: #fff; }
.brand-name { font-family: "DejaVu Serif", serif; font-size: 18.5px; margin: 0 13px 0 9px; color: #eee; letter-spacing: -.3px; white-space: nowrap; }
.back { width: 30px; height: 30px; border: 3px solid #fff; border-radius: 50%; display: flex; align-items: center; justify-content: center; }
.back-ic { width: 8px; height: 12px; }
.search { width: 682px; height: 30px; align-self: flex-start; margin: 8px 0 0 21px; border-bottom: 1px solid #fff; display: flex; align-items: center; font-size: 16px; padding: 2px 0 0 2px; }
.search-ic { width: 19px; height: 19px; margin: 3px 4px 0 0; }
.scope { width: 180px; height: 26px; align-self: flex-start; margin: 12px 0 0 8px; background: #4a75d4; border-radius: 3px; display: flex; align-items: center; justify-content: space-between; padding: 0 19px 0 16px; }
.top-right { margin-left: auto; display: flex; align-items: center; padding-right: 30px; }
.notif { position: relative; }
.notif-site { margin-right: 22px; }
.notif-bell { margin-right: 26px; }
.site-ic { width: 30px; height: 24px; color: #dfe1e8; }
.bell-ic { width: 22px; height: 24px; color: #dfe1e8; }
.badge { position: absolute; top: -11px; right: -11px; width: 22px; height: 22px; border-radius: 50%; background: #c00000; color: #eee; font-size: 13px; font-weight: 700; display: flex; align-items: center; justify-content: center; }
.badge-b { font-size: 12.500px; letter-spacing: -.3px; }
.avatar { width: 30px; height: 30px; border-radius: 50%; background: #f5e026; border: 1px solid #fff; box-shadow: 0 1px 3px rgba(0,0,0,.45); color: #111; font-size: 15px; display: inline-flex; align-items: center; justify-content: center; flex: none; }
.avatar-top { margin-right: 6px; }

/* sidebar */
.shell { display: flex; height: 742px; }
.sidebar { width: 250px; flex: none; padding-top: 1px; background: #151e3a; }
.nav { height: 33px; background: #4a75d4; border-bottom: 1px solid #151e3a; display: flex; align-items: center; color: #f1f4fc; font-size: 16px; padding-left: 17px; }
.nav-active { height: 32px; background: #5e41dd; border: 0; }
.nav-sub { height: 35px; display: flex; align-items: center; padding-left: 16px; background: #332d80; border-bottom: 1px solid #151e3a; color: #fff; font-size: 14px; }
.nav-ic { width: 18px; height: 16px; margin-right: 17px; color: #fff; }
.nav-chev { margin-left: auto; margin-right: 13px; margin-top: 2px; color: #fff; }

/* main */
.main { flex: 1; background: #f4f6fc; min-width: 0; }
.pagehead { height: 82px; display: flex; align-items: center; padding-left: 32px; }
.folder-box { width: 48px; height: 50px; position: relative; margin-right: 14px; }
.folder-big { position: absolute; left: 0; top: 12px; width: 32px; height: 24px; }
.star { position: absolute; left: 31px; top: 0; width: 13px; height: 13px; }
.warn-big { position: absolute; left: 32px; top: 36px; width: 16px; height: 14px; }
.crumbs { display: flex; align-items: center; gap: 2px; margin-right: 19px; margin-top: -2px; }
.crumb-link { color: #4d7cff; }
.crumb-sep { color: #777; }
.crumb-cur { color: #444; font-weight: 500; }
.new-pill { height: 19px; padding: 0 8px; background: #5b85c8; color: #fff; border-radius: 10px; font-size: 12.500px; font-weight: 700; display: flex; align-items: center; gap: 4px; margin-top: -1px; box-shadow: 0 1px 2px rgba(0,0,0,.35); }
.new-ic { width: 12px; height: 12px; }

.toolbar { height: 41px; background: #fff; border-bottom: 2px solid #bbb; display: flex; align-items: center; padding: 0 0 0 32px; }
.count { width: 20px; height: 20px; border-radius: 5px; background: #4a75d4; color: #fff; display: flex; align-items: center; justify-content: center; font-size: 14px; margin-right: 8px; }
.tool-label { font-size: 12px; color: #666; }
.sel { width: 62px; }
.vsep { width: 1px; height: 24px; background: #777; margin-right: 21px; }
.tools { display: grid; grid-template-columns: 99px 83px 75px 76px 102px 90px 72px 76px 75px; }
.tool { display: flex; align-items: center; gap: 9px; }
.tool-first { gap: 10px; }
.ti { width: 20px; height: 20px; }
.ti-move { width: 24px; height: 24px; }
.ti-narrow { width: 14px; height: 20px; margin-right: 3px; }
.ti-proc { width: 15px; height: 22px; margin-right: 4px; }
.ti-lock { width: 16px; height: 22px; margin-right: 3px; }
.ti-share { width: 18px; height: 20px; margin-right: 2px; }
.ti-dots { width: 24px; height: 6px; margin-right: -1px; }
.vsep2 { margin: 0 19px 0 0; }
.title-filter { width: 150px; height: 24px; border: 1px solid #666; border-radius: 5px; font-size: 12px; color: #aaa; display: flex; align-items: center; padding-left: 9px; }
.ti-filter { width: 18px; height: 12px; margin: 1px 11px 0 11px; }

.workspace { position: relative; padding: 15px 8px 0 16px; }
.actions { display: flex; height: 32px; }
.btn { height: 32px; border: 0; border-radius: 3px; background: #4a75d4; color: #fff; font: 14px Roboto, sans-serif; display: flex; align-items: center; justify-content: space-between; padding: 0 20px 0 16px; box-shadow: 0 1px 2px rgba(0,0,0,.3); }
.btn-layout { width: 157px; }
.btn-panels { width: 179px; margin-left: 8px; }
.btn-actions { width: 110px; margin-left: 7px; }
.btn-exit { width: 167px; margin-left: 10px; padding-right: 16px; }

.menu { position: absolute; left: 16px; top: 47px; width: 230px; height: 324px; background: #fff; list-style: none; border-radius: 3px; box-shadow: 0 2px 6px rgba(0,0,0,.3); z-index: 5; overflow: hidden; }
.menu-item { height: 36px; display: flex; align-items: center; padding-left: 16px; color: #212529; font-size: 14px; }
.menu-on { background: #cfe2fd; }
.mi { width: 14px; height: 14px; margin-right: 2px; color: #222; }
.mi-on { color: #666; }

.columns { display: flex; margin-top: 33px; }
.col { display: flex; flex-direction: column; }
.col-a { width: 785px; margin-right: 16px; gap: 18px; }
.col-b { width: 384px; margin-top: -1px; margin-right: 16px; gap: 17px; }
.col-c { width: 385px; margin-top: -1px; gap: 18px; }

.card { background: #fff; border: 1px solid #bbb; border-radius: 5px; box-shadow: 0 4px 16px rgba(60,90,170,.16); overflow: hidden; flex: none; }
.c-head { height: 40px; border-bottom: 4px solid #bccbe3; display: flex; align-items: center; padding: 0 18px 0 15px; }
.c-head h2 { font-size: 16px; font-weight: 500; color: #333; margin-left: 7px; margin-top: -2px; }
.up { width: 12px; height: 8px; color: #333; }
.exp { width: 14px; height: 20px; color: #444; margin-left: auto; margin-top: 4px; }
.exp-d { margin-right: 2px; }
.keb { width: 4px; height: 14px; color: #555; margin-left: 8px; margin-top: 4px; }

/* table */
.card-table { height: 328px; }
.t-head { height: 45px; border-bottom: 4px solid #bccbe3; display: flex; align-items: center; font-size: 16px; font-weight: 500; color: #333; }
.c-name { width: 422px; flex: none; display: flex; align-items: center; padding-left: 24px; }
.c-status { width: 108px; flex: none; }
.c-by { width: 108px; flex: none; display: flex; justify-content: center; padding-right: 5px; }
.t-head .c-by { justify-content: flex-start; padding: 0; }
.t-row { height: 56px; border-bottom: 1px solid #ddd; display: flex; align-items: center; }
.t-row-s { height: 55px; }
.t-row-l { height: 58px; }
.t-row-alt { background: #f4f6fb; }
.t-row-last { border: 0; height: 56px; }
.box { width: 16px; height: 16px; border: 1px solid #777; border-radius: 3px; background: #fff; margin-right: 16px; flex: none; }
.ficon { width: 32px; height: 24px; background: #4d7eff; border-radius: 2px; margin-right: 32px; flex: none; position: relative; }
.warn-sm { position: absolute; left: 34px; top: 20px; width: 16px; height: 14px; }
.ftext { display: flex; flex-direction: column; white-space: nowrap; margin-top: 5px; }
.fname { color: #444; font-size: 14px; line-height: 18px; }
.fname small { font-size: 10px; color: #777; }
.fdate { color: #777; font-size: 12px; line-height: 18px; }
.pill { width: 83px; height: 18px; border-radius: 9px; background: #7fb05d; color: #111; font-size: 12px; display: flex; align-items: center; padding-left: 9px; gap: 5px; box-shadow: 0 1px 2px rgba(0,0,0,.3); }
.pill-ic { width: 11px; height: 12px; color: #111; }

/* versions */
.card-versions { height: 192px; }
.c-head-v { height: 39px; }
.v-row { height: 55px; background: #e0ecfb; border-left: 4px solid #4a75d4; border-bottom: 1px solid #eee; display: flex; align-items: center; padding: 0 13px 0 12px; }
.v-doc { width: 20px; height: 26px; color: #e07a52; margin-right: 17px; }
.v-text { flex: 1; }
.v-title { font-size: 14px; color: #333; display: flex; align-items: center; gap: 5px; line-height: 18px; }
.v-trash { width: 12px; height: 14px; }
.v-sub { font-size: 12px; color: #555; line-height: 16px; }
.v-status { width: 22px; height: 18px; border-radius: 50%; background: #7fb05d; display: flex; align-items: center; justify-content: center; margin: -2px 6px 0 0; }
.up-v { margin-top: -6px; }
.v-msg { height: 47px; padding: 0 15px 0 16px; display: flex; align-items: center; font-size: 12px; color: #666; border-bottom: 3px solid #bccbe3; }
.v-foot { display: flex; justify-content: flex-end; gap: 11px; padding: 13px 12px 0 0; }
.add-ic { position: relative; width: 33px; height: 32px; }
.add-base { width: 34px; height: 32px; }
.add-plus { position: absolute; right: 0; bottom: 0; width: 20px; height: 20px; color: #4a7dea; }

/* issues */
.card-issues { height: 168px; }
.issue-msg { height: 71px; border-bottom: 2px solid #bccbe3; padding: 17px 16px 0; font-size: 12px; line-height: 18px; color: #666; }
.issue-foot { display: flex; padding: 11px 0 0 16px; align-items: flex-start; }
.select { height: 34px; border: 1px solid #ddd; border-radius: 4px; background: #fff; display: flex; align-items: center; justify-content: space-between; padding: 0 13px 0 9px; color: #555; font-size: 14px; }
.select-issue { width: 310px; }
.wand { position: relative; width: 30px; height: 34px; margin-left: 8px; }
.wand-ic { width: 18px; height: 16px; }
.wand-plus { position: absolute; right: 2px; bottom: 0; width: 20px; height: 20px; }

/* forms */
.card-forms { height: 112px; }
.toggle-row { height: 33px; border-bottom: 1px solid #aaa; display: flex; align-items: center; padding-left: 16px; gap: 6px; }
.toggle { width: 28px; height: 16px; border-radius: 8px; background: #4a75d4; position: relative; display: block; }
.knob { position: absolute; right: -1px; top: -1px; width: 18px; height: 18px; border-radius: 50%; background: #fff; box-shadow: 0 1px 3px rgba(0,0,0,.4); }
.toggle-label { font-size: 12px; font-weight: 500; color: #555; }
.forms-empty { height: 37px; display: flex; align-items: center; padding-left: 16px; color: #555; font-size: 14px; }

/* workflows */
.card-wf { height: 197px; margin-top: -1px; }
.wf-msg { height: 68px; padding: 15px 16px 0; font-size: 14px; line-height: 18px; color: #555; text-align: center; }
.select-wf { width: 350px; margin-left: 16px; }
.wf-actions { display: flex; justify-content: space-between; padding: 6px 16px 0; }
.btn-now { width: 175px; padding-right: 20px; }
.btn-off { height: 32px; border: 0; border-radius: 3px; background: #ddd; color: #fff; font: 14px Roboto, sans-serif; display: flex; align-items: center; justify-content: center; }
.btn-activate { width: 108px; gap: 10px; }
.play { width: 13px; height: 14px; }

/* details */
.card-details { height: 274px; }
.sec { padding: 22px 20px 0; }
.sec-tags { height: 101px; border-bottom: 1px solid #bccbe3; }
.sec-h { display: flex; align-items: center; height: 20px; margin-left: -6px; }
.sec-h h3 { font-size: 16px; font-weight: 500; color: #333; margin-left: 8px; }
.up-thin { width: 12px; height: 8px; color: #333; margin-top: -5px; }
.tags { display: flex; margin-top: 22px; gap: 8px; align-items: center; }
.tag { width: 66px; height: 20px; border-radius: 10px; background: #3d50f5; color: #fff; font-size: 12px; font-weight: 500; display: flex; align-items: center; justify-content: space-between; padding: 0 4px 0 6px; }
.tag-x { width: 12px; height: 12px; }
.tag-add { width: 65px; height: 18px; border: 1px dashed #777; border-radius: 9px; color: #bbb; font-size: 12px; display: flex; align-items: center; justify-content: center; white-space: nowrap; }
.attr { display: flex; align-items: center; margin-top: 22px; height: 20px; font-size: 14px; }
.attr-k { width: 124px; color: #777; }
.attr-v { color: #333; font-weight: 500; }
.pen { width: 13px; height: 13px; margin-left: auto; }
.bin { width: 11px; height: 13px; margin-left: 9px; color: #6f7583; margin-right: 1px; }
.add-attr { display: flex; align-items: center; margin: 16px 0 0 2px; color: #4a7dea; font-size: 12px; gap: 5px; }
.plus-sm { width: 12px; height: 12px; }

/* activity */
.card-activity { height: 226px; }
.c-head-a { height: 39px; }
.tabs { height: 36px; border-bottom: 1px solid #ddd; display: flex; padding-left: 16px; }
.tab { padding: 0 10px; height: 35px; display: flex; align-items: center; color: #6c757d; font-size: 14px; }
.tab-on { border-bottom: 2px solid #4a75d4; width: 89px; }
.act-msg { height: 91px; padding: 24px 34px 0; border-bottom: 2px solid #e3edfb; text-align: center; font-size: 14px; line-height: 21px; color: #6c757d; }
.composer { display: flex; align-items: center; padding: 0 16px; height: 56px; }
.placeholder { color: #666; font-size: 14px; margin-left: 16px; }
.btn-post { width: 64px; height: 24px; margin-left: auto; }
```
